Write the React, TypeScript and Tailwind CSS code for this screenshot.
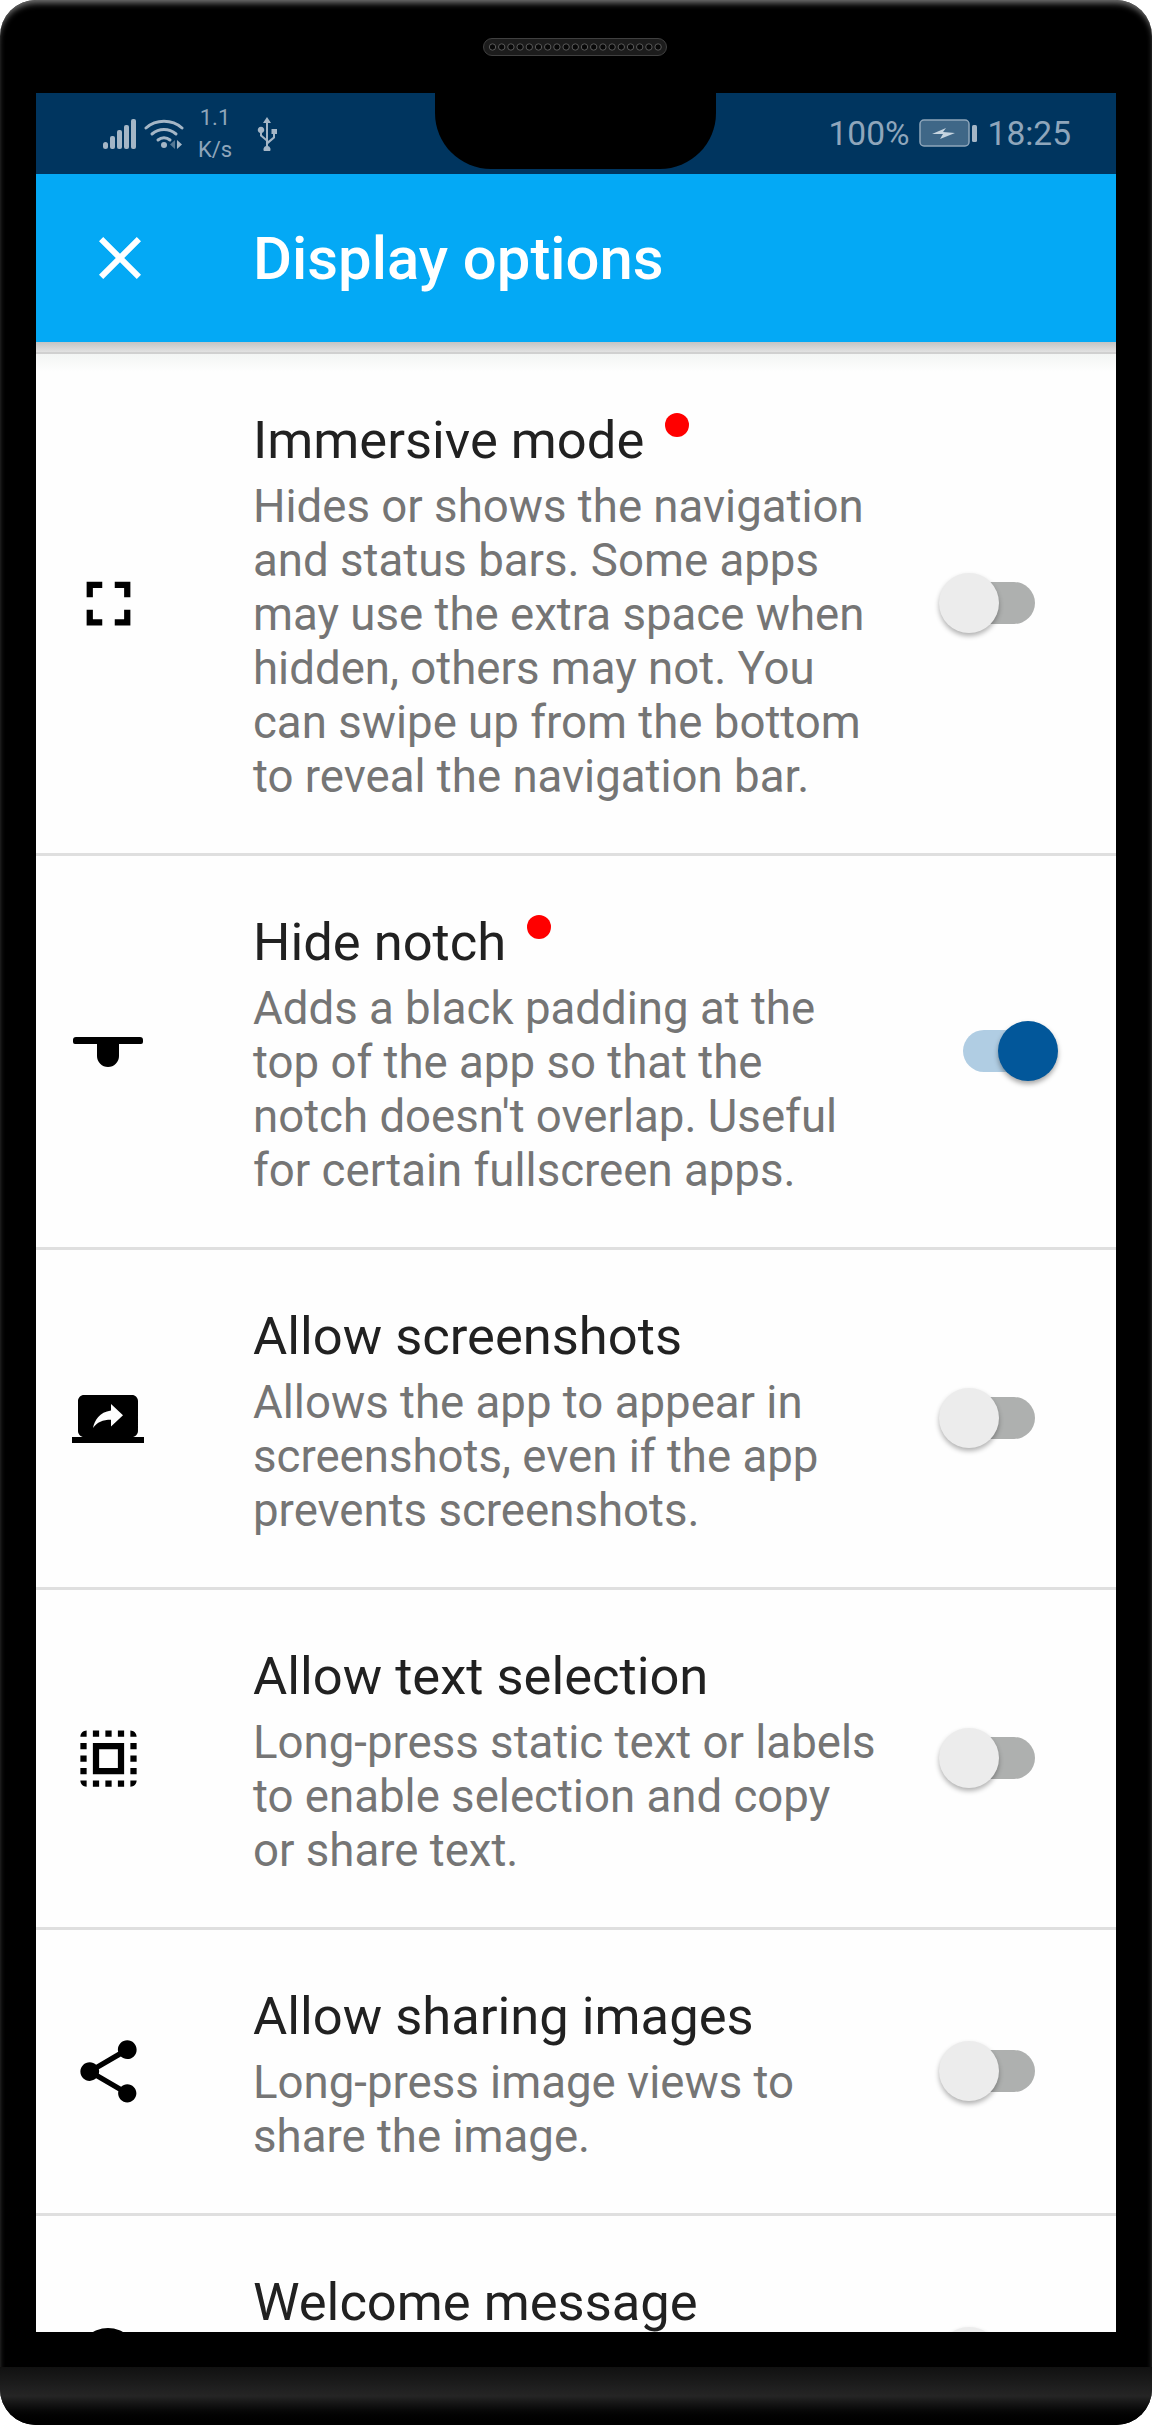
const rows = [
  {
    title: "Immersive mode",
    text: "Hides or shows the navigation and status bars. Some apps may use the extra space when hidden, others may not. You can swipe up from the bottom to reveal the navigation bar.",
    dot: true,
    on: false,
    icon: "fullscreen",
  },
  {
    title: "Hide notch",
    text: "Adds a black padding at the top of the app so that the notch doesn't overlap. Useful for certain fullscreen apps.",
    dot: true,
    on: true,
    icon: "notch",
  },
  {
    title: "Allow screenshots",
    text: "Allows the app to appear in screenshots, even if the app prevents screenshots.",
    dot: false,
    on: false,
    icon: "screen",
  },
  {
    title: "Allow text selection",
    text: "Long-press static text or labels to enable selection and copy or share text.",
    dot: false,
    on: false,
    icon: "select",
  },
  {
    title: "Allow sharing images",
    text: "Long-press image views to share the image.",
    dot: false,
    on: false,
    icon: "share",
  },
  {
    title: "Welcome message",
    text: "",
    dot: false,
    on: false,
    icon: "circle",
  },
];

function RowIcon({ name }: { name: string }) {
  if (name === "notch") {
    return (
      <svg width="72" height="72" viewBox="0 0 72 72" fill="#000">
        <path d="M1 24a3 3 0 0 1 3-3h64a3 3 0 0 1 3 3v2a2 2 0 0 1-2 2H47v12a11 11 0 0 1-22 0V28H3a2 2 0 0 1-2-2z" />
      </svg>
    );
  }
  if (name === "screen" || name === "circle") {
    return (
      <svg width="72" height="72" viewBox="0 0 24 24" fill="#000">
        <path
          d={
            name === "screen"
              ? "M20 18c1.1 0 1.99-.9 1.99-2L22 6c0-1.11-.9-2-2-2H4c-1.11 0-2 .89-2 2v10c0 1.1.89 2 2 2H0v2h24v-2h-4zm-7-3.53v-2.19c-2.78 0-4.61.85-6 2.72.56-2.67 2.11-5.33 6-5.87V7l4 3.73-4 3.74z"
              : "M12 2a10 10 0 1 0 0 20 10 10 0 0 0 0-20z"
          }
        />
      </svg>
    );
  }
  const paths: Record<string, string> = {
    fullscreen: "M7 14H5v5h5v-2H7v-3zm-2-4h2V7h3V5H5v5zm12 7h-3v2h5v-5h-2v3zM14 5v2h3v3h2V5h-5z",
    select:
      "M3 5h2V3c-1.1 0-2 .9-2 2zm0 8h2v-2H3v2zm4 8h2v-2H7v2zM3 9h2V7H3v2zm10-6h-2v2h2V3zm6 0v2h2c0-1.1-.9-2-2-2zM5 21v-2H3c0 1.1.9 2 2 2zm-2-4h2v-2H3v2zM9 3H7v2h2V3zm2 18h2v-2h-2v2zm8-8h2v-2h-2v2zm0 8c1.1 0 2-.9 2-2h-2v2zm0-12h2V7h-2v2zm0 8h2v-2h-2v2zm-4 4h2v-2h-2v2zm0-16h2V3h-2v2zM7 17h10V7H7v10zm2-8h6v6H9V9z",
    share:
      "M18 16.08c-.76 0-1.44.3-1.96.77L8.91 12.7c.05-.23.09-.46.09-.7s-.04-.47-.09-.7l7.05-4.11c.54.5 1.25.81 2.04.81 1.66 0 3-1.34 3-3s-1.34-3-3-3-3 1.34-3 3c0 .24.04.47.09.7L8.04 9.81C7.5 9.31 6.79 9 6 9c-1.66 0-3 1.34-3 3s1.34 3 3 3c.79 0 1.5-.31 2.04-.81l7.12 4.16c-.05.21-.08.43-.08.65 0 1.61 1.31 2.92 2.92 2.92 1.61 0 2.92-1.31 2.92-2.92s-1.31-2.92-2.92-2.92z",
  };
  return (
    <svg width="75" height="75" viewBox="0 0 24 24" fill="#000" className="-m-[1.5px]">
      <path d={paths[name]} />
    </svg>
  );
}

function Toggle({ on }: { on: boolean }) {
  return (
    <div className="relative h-[61px] w-[120px] shrink-0">
      <div
        className={
          on
            ? "absolute left-[24px] top-[9px] h-[42px] w-[74px] rounded-full bg-[#b0cde3]"
            : "absolute left-[24px] top-[9px] h-[42px] w-[72px] rounded-full bg-[#aeb0af]"
        }
      />
      <div
        className={
          on
            ? "absolute left-[59px] top-0 h-[60px] w-[60px] rounded-full bg-[#02579a] shadow-[0_3px_5px_rgba(0,0,0,0.35)]"
            : "absolute left-0 top-0 h-[60px] w-[60px] rounded-full bg-[#ececec] shadow-[0_3px_5px_rgba(0,0,0,0.3)]"
        }
      />
    </div>
  );
}

function Speaker() {
  return (
    <svg width="184" height="18" viewBox="0 0 184 18" className="absolute left-[483px] top-[38px]">
      <rect x="0.5" y="0.5" width="183" height="17" rx="8.5" fill="#1c1c1c" stroke="#404040" />
      {Array.from({ length: 19 }).map((_, i) => (
        <circle key={i} cx={9.5 + i * 9.2} cy="9" r="3.2" fill="#080808" stroke="#5a5a5a" strokeWidth="1" />
      ))}
    </svg>
  );
}

function StatusLeft() {
  return (
    <div className="flex items-center text-[#8fa6bb]">
      <svg width="36" height="32" viewBox="0 0 36 32" fill="#a4b6c6" className="ml-[66px]">
        <rect x="1" y="24" width="5" height="7" rx="2.5" />
        <rect x="8" y="18" width="5" height="13" rx="2" />
        <rect x="15" y="12" width="5" height="19" rx="2" />
        <rect x="22" y="7" width="5" height="24" rx="2" />
        <rect x="29" y="1" width="5" height="30" rx="2" />
      </svg>
      <svg width="40" height="32" viewBox="0 0 40 32" fill="none" stroke="#a4b6c6" strokeWidth="3" strokeLinecap="round" className="ml-[6px]">
        <path d="M2 10c10-9 26-9 36 0" />
        <path d="M8 16c7-6 17-6 24 0" />
        <path d="M14 22c3.500-3 8.500-3 12 0" />
        <circle cx="20" cy="27" r="3" fill="#a4b6c6" stroke="none" />
        <path d="M33 22v9l5-4.500z" fill="#a4b6c6" stroke="none" />
        <path d="M31 22v9l-5-4.500z" fill="#567894" stroke="none" />
      </svg>
      <div className="ml-[13px] flex w-[36px] flex-col items-center font-['Roboto',sans-serif] text-[22px] leading-[32px]">
        <span>1.1</span>
        <span>K/s</span>
      </div>
      <svg width="22" height="34" viewBox="0 0 22 34" fill="#a4b6c6" className="ml-[23px]">
        <path d="M11 0l4 6h-3v18l5-4v-3h-1.500v-5H21v5h-2v4l-7 6v2a3.500 3.500 0 1 1-2 0v-5l-6-5v-3a3.200 3.200 0 1 1 2 0v2l4 3.500V6H7z" />
      </svg>
    </div>
  );
}

function StatusRight() {
  return (
    <div className="flex items-center font-['Roboto',sans-serif] text-[33.5px] leading-none text-[#8fa6bb]">
      <span>100%</span>
      <svg width="60" height="30" viewBox="0 0 60 30" className="ml-[9px]">
        <rect x="1" y="1" width="49" height="26" rx="4" fill="#3f6787" stroke="#8fa6bb" strokeWidth="1.500" />
        <rect x="53" y="6" width="5" height="17" rx="1.500" fill="#a4b6c6" />
        <path d="M13 15l14-6-3 4 12 1-15 6 3-5z" fill="#c7d5e0" />
      </svg>
      <span className="ml-[9px]">18:25</span>
    </div>
  );
}

export default function App() {
  return (
    <div className="h-[2425px] w-[1152px] bg-white">
      <div className="relative flex h-full flex-col overflow-hidden rounded-[36px] bg-black shadow-[inset_0_5px_6px_-2px_#777]">
        <Speaker />
        <div className="h-[93px] shrink-0" />

        <div className="mx-[36px] flex h-[2239px] flex-col overflow-hidden bg-[#fefefe]">
          <div className="relative flex h-[81px] shrink-0 items-center justify-between bg-[#00355f] pr-[45px]">
            <StatusLeft />
            <StatusRight />
            {/* camera cutout */}
            <div className="absolute left-[399px] top-0 h-[76px] w-[281px] rounded-b-[56px] bg-black" />
          </div>

          <div className="flex h-[168px] shrink-0 items-center bg-[#04a9f5]">
            <svg width="72" height="72" viewBox="0 0 24 24" fill="#fff" className="ml-[48px]">
              <path d="M19 6.410 17.590 5 12 10.590 6.410 5 5 6.410 10.590 12 5 17.590 6.410 19 12 13.410 17.590 19 19 17.590 13.410 12z" />
            </svg>
            <h1 className="ml-[97px] pt-[3px] font-['Roboto',sans-serif] text-[59.8px] leading-none font-medium text-white">Display options</h1>
          </div>

          <div className="h-[10px] shrink-0 bg-gradient-to-b from-[#c4c4c4] to-[#e2e2e2]" />
          <div className="h-[2px] shrink-0 bg-[#d0d0d0]" />

          <div className="relative flex-1 overflow-hidden font-['Roboto',sans-serif]">
            {/* soft fade under the toolbar */}
            <div className="absolute inset-x-0 top-0 h-[18px] bg-gradient-to-b from-[#f3f5f4] to-transparent" />
            {rows.map((row) => (
              <div key={row.title} className="flex items-center border-b-[3px] border-[#dfdfdf]">
                <div className="w-[217px] shrink-0 pl-[36px]">
                  <RowIcon name={row.icon} />
                </div>
                <div className="w-[625px] shrink-0 pt-[53px] pb-[49px]">
                  <div className="h-[66px] text-[52.5px] leading-[66px] text-[#212121]">
                    <span>{row.title}</span>
                    {row.dot && <span className="ml-[21px] inline-block h-[24px] w-[24px] -translate-y-[21px] rounded-full bg-[#ff0000]" />}
                  </div>
                  <p className="mt-[7px] min-h-[108px] text-[45.6px] leading-[54px] text-[#757575]">{row.text}</p>
                </div>
                <div className="ml-[61px]">
                  <Toggle on={row.on} />
                </div>
              </div>
            ))}
          </div>
        </div>

        <div className="h-[35px] shrink-0" />
        <div className="flex-1 bg-gradient-to-b from-[#111111] via-[#252525] to-[#000000]" />
      </div>
    </div>
  );
}
